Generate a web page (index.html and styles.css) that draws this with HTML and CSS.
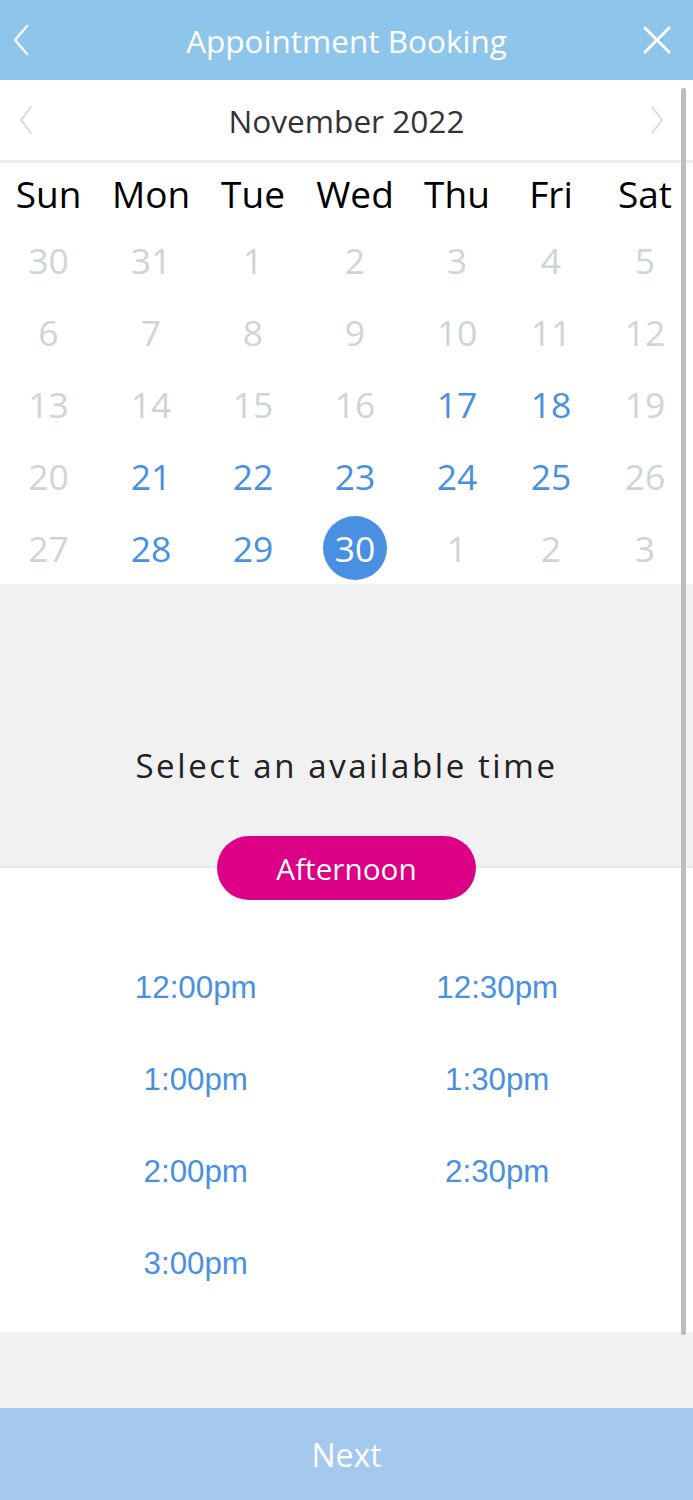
FILE: index.html
```html
<!DOCTYPE html>
<html lang="en">
<head>
    <meta charset="UTF-8">
    <meta name="viewport" content="width=device-width, initial-scale=1.0">
    <title>Appointment Booking</title>
    <link rel="stylesheet" href="styles.css">
</head>
<body>

<!-- Top bar -->
<header class="topbar">
    <button class="icon-btn back" aria-label="Back">
        <svg width="16" height="32" viewBox="0 0 16 32"><path d="M14 2 L2 16 L14 30" fill="none" stroke="#fff" stroke-width="2.4" stroke-linecap="round" stroke-linejoin="round"/></svg>
    </button>
    <h1>Appointment Booking</h1>
    <button class="icon-btn close" aria-label="Close">
        <svg width="28" height="28" viewBox="0 0 28 28"><path d="M2 2 L26 26 M26 2 L2 26" fill="none" stroke="#fff" stroke-width="3" stroke-linecap="round"/></svg>
    </button>
</header>

<main class="content">
    <!-- Calendar -->
    <section class="calendar">
        <div class="month-nav">
            <span class="nav-arrow prev">
                <svg width="14" height="30" viewBox="0 0 14 30"><path d="M12 2 L2 15 L12 28" fill="none" stroke="#d6dcdf" stroke-width="2" stroke-linecap="round"/></svg>
            </span>
            <span class="month-title">November 2022</span>
            <span class="nav-arrow next">
                <svg width="14" height="30" viewBox="0 0 14 30"><path d="M2 2 L12 15 L2 28" fill="none" stroke="#d6dcdf" stroke-width="2" stroke-linecap="round"/></svg>
            </span>
        </div>
        <div class="days" id="days">
            <div class="day-name">Sun</div>
            <div class="day-name">Mon</div>
            <div class="day-name">Tue</div>
            <div class="day-name">Wed</div>
            <div class="day-name">Thu</div>
            <div class="day-name">Fri</div>
            <div class="day-name">Sat</div>
        </div>
    </section>

    <!-- Time selection -->
    <section class="time-head">
        <h2>Select an available time</h2>
    </section>
    <section class="slots">
        <div class="period">Afternoon</div>
        <div class="slot-grid">
            <a class="slot">12:00pm</a>
            <a class="slot">12:30pm</a>
            <a class="slot">1:00pm</a>
            <a class="slot">1:30pm</a>
            <a class="slot">2:00pm</a>
            <a class="slot">2:30pm</a>
            <a class="slot">3:00pm</a>
        </div>
    </section>
    <div class="spacer"></div>

    <div class="scrollbar"></div>
</main>

<button class="next-btn">Next</button>

<script>
    // November 2022 grid, with days from the months around it
    const cells = [
        [30, 'off'], [31, 'off'], [1, 'off'], [2, 'off'], [3, 'off'], [4, 'off'], [5, 'off'],
        [6, 'off'], [7, 'off'], [8, 'off'], [9, 'off'], [10, 'off'], [11, 'off'], [12, 'off'],
        [13, 'off'], [14, 'off'], [15, 'off'], [16, 'off'], [17, 'open'], [18, 'open'], [19, 'off'],
        [20, 'off'], [21, 'open'], [22, 'open'], [23, 'open'], [24, 'open'], [25, 'open'], [26, 'off'],
        [27, 'off'], [28, 'open'], [29, 'open'], [30, 'selected'], [1, 'off'], [2, 'off'], [3, 'off']
    ];
    const days = document.getElementById('days');
    cells.forEach(function (c) {
        days.innerHTML += '<div class="date"><span class="date-num ' + c[1] + '">' + c[0] + '</span></div>';
    });
</script>

</body>
</html>
```

FILE: styles.css
```css
* { box-sizing: border-box; }
body { margin: 0; font-family: "Open Sans", "Noto Sans", sans-serif; background-color: #f1f1f1; }

.topbar { height: 80px; background-color: #8ec5eb; display: grid; grid-template-columns: 1fr auto 1fr; align-items: center; padding: 0 12px; }
.topbar h1 { margin: 0; font-size: 31.5px; font-weight: 400; color: #fff; }
.icon-btn { background: none; border: none; padding: 0; display: flex; align-items: center; cursor: pointer; }
.icon-btn.back { padding-left: 1px; }
.icon-btn.close { justify-self: end; padding-right: 10px; }

.content { position: relative; }
.scrollbar { position: absolute; top: 8px; right: 7px; width: 5px; height: 1247px; background-color: #bdbdbd; border-radius: 2px; }

.calendar { background-color: #fff; }
.month-nav { height: 83px; display: grid; grid-template-columns: 1fr auto 1fr; align-items: center; padding: 0 24px; border-bottom: 3px solid #e8ecee; }
.month-title { font-size: 31.6px; color: #333; }
.nav-arrow { display: flex; }
.nav-arrow.prev { margin-left: -5px; }
.nav-arrow.next { justify-self: end; margin-right: 5px; }

.days { display: grid; grid-template-columns: 97fr 108fr 96fr 108fr 96fr 92fr 96fr; }
.day-name { height: 61px; display: flex; align-items: center; justify-content: center; font-size: 37px; color: #000; }
.date { height: 72px; display: flex; align-items: center; justify-content: center; }
.date-num { width: 64px; height: 64px; border-radius: 50%; display: flex; align-items: center; justify-content: center; font-size: 35.5px; }
.date-num.off { color: #cdd5d8; }
.date-num.open { color: #4a90e2; }
.date-num.selected { background-color: #4a90e2; color: #fff; }

.time-head { height: 282px; padding-top: 159px; text-align: center; }
.time-head h2 { margin: 0; font-size: 33px; font-weight: 400; letter-spacing: 2.6px; color: #222; }

.slots { background-color: #fff; border-top: 2px solid #e6eaee; padding-bottom: 22px; display: flex; flex-direction: column; align-items: center; }
.period { margin-top: -32px; width: 259px; height: 64px; border-radius: 32px; background-color: #dc0087; color: #fff; font-size: 29.7px; display: flex; align-items: center; justify-content: center; }
.slot-grid { align-self: stretch; margin-top: 42px; padding: 0 45px; display: grid; grid-template-columns: 1fr 1fr; grid-auto-rows: 92px; }
.slot { display: flex; align-items: center; justify-content: center; font-family: "Liberation Sans", Arial, sans-serif; font-size: 31.3px; color: #4a90e2; cursor: pointer; }

.spacer { height: 76px; }

.next-btn { display: block; width: 100%; height: 92px; border: none; background-color: #a5c8ef; color: #fff; font-family: "Open Sans", sans-serif; font-size: 32px; cursor: pointer; }
```
